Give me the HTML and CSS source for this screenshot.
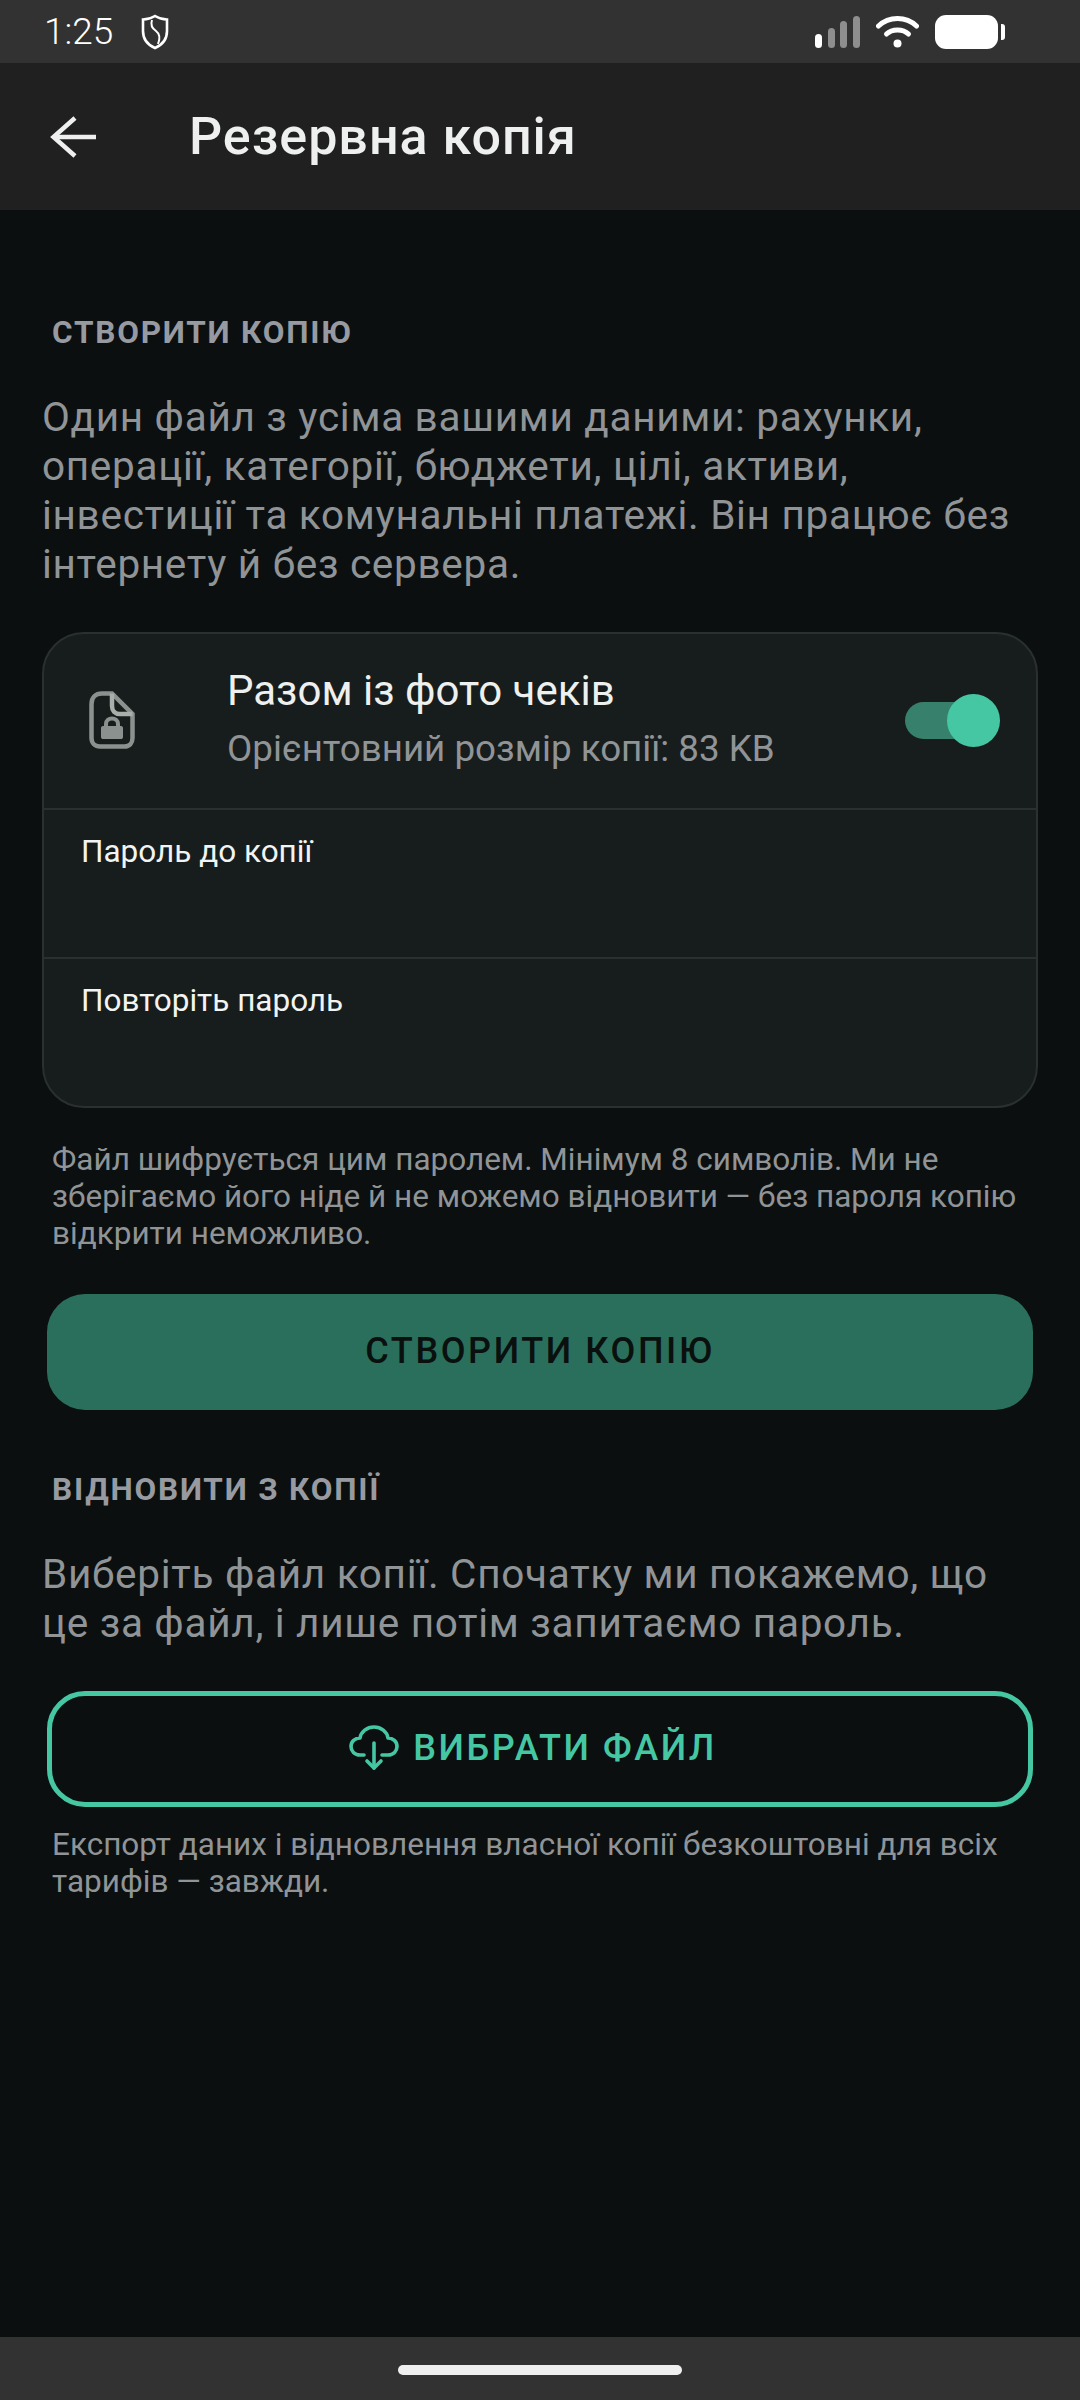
FILE: index.html
```html
<!DOCTYPE html>
<html lang="uk">
<head>
    <meta charset="UTF-8" />
    <meta name="viewport" content="width=device-width, initial-scale=1.0" />
    <title>Резервна копія</title>
    <link rel="stylesheet" href="styles.css">
</head>
<body>
    <div class="screen">
        <div class="status-bar">
            <div class="status-left">
                <span class="clock">1:25</span>
                <svg class="shield" viewBox="0 0 28 36" fill="none" stroke="#fff" stroke-width="2.6">
                    <path d="M14 2 C18 4.5 22 5.5 26 5.5 V17 C26 25 21 31 14 34 C7 31 2 25 2 17 V5.5 C6 5.5 10 4.5 14 2 Z" />
                    <path d="M11 6 C9 12 12 15 15 17 C19 20 19 25 17 30" stroke-width="2" />
                </svg>
            </div>
            <div class="status-right">
                <svg class="signal" viewBox="0 0 45 32">
                    <rect x="0" y="18" width="7" height="14" rx="3.5" fill="#fff" />
                    <rect x="13" y="12" width="7" height="20" rx="3.5" fill="#8e8e8e" />
                    <rect x="25" y="5" width="7" height="27" rx="3.5" fill="#8e8e8e" />
                    <rect x="38" y="0" width="7" height="32" rx="3.5" fill="#8e8e8e" />
                </svg>
                <svg class="wifi" viewBox="0 0 43 32" fill="none" stroke="#fff" stroke-width="5" stroke-linecap="round">
                    <path d="M2.500 10 C13 0 30 0 40.500 10" />
                    <path d="M10.500 18 C16 12.500 27 12.500 32.500 18" />
                    <circle cx="21.500" cy="27.500" r="4" fill="#fff" stroke="none" />
                </svg>
                <div class="battery">
                    <div class="battery-body"></div>
                    <div class="battery-tip"></div>
                </div>
            </div>
        </div>

        <header class="app-bar">
            <svg class="back" viewBox="0 0 46 42" fill="none" stroke="#edf0ee" stroke-width="4.500">
                <path d="M46 21 H4" />
                <path d="M25 2 L3.500 21 L25 40" />
            </svg>
            <h1 class="app-title">Резервна копія</h1>
        </header>

        <main class="content">
            <h2 class="section-title">СТВОРИТИ КОПІЮ</h2>
            <p class="lead">Один файл з усіма вашими даними: рахунки, операції, категорії, бюджети, цілі, активи, інвестиції та комунальні платежі. Він працює без інтернету й без сервера.</p>

            <div class="card">
                <div class="photo-row">
                    <svg class="file-icon" viewBox="0 0 46 58" fill="none">
                        <path d="M13 2.5 H23 L43.5 23 V47 C43.5 52 40.5 55.5 35.5 55.5 H11 C6 55.5 2.5 52 2.5 47 V13 C2.5 6.500 6.500 2.500 13 2.500 Z" stroke="#8b918e" stroke-width="4.500" />
                        <path d="M23 2.500 V15 C23 20 26 23 31 23 H43.500" stroke="#a9aeab" stroke-width="4.500" />
                        <path d="M14 35 H32 C33.500 35 34 36 34 37 V46 C34 47.500 33 48 32 48 H14 C13 48 12 47.500 12 46 V37 C12 36 12.500 35 14 35 Z" fill="#8b918e" />
                        <path d="M17 35 V33 C17 25.500 29 25.500 29 33 V35" stroke="#8b918e" stroke-width="4" />
                    </svg>
                    <div class="photo-text">
                        <div class="photo-title">Разом із фото чеків</div>
                        <div class="photo-sub">Орієнтовний розмір копії: 83 KB</div>
                    </div>
                    <div class="switch">
                        <div class="switch-thumb"></div>
                    </div>
                </div>
                <div class="field">Пароль до копії</div>
                <div class="field">Повторіть пароль</div>
            </div>

            <p class="note note-first">Файл шифрується цим паролем. Мінімум 8 символів. Ми не зберігаємо його ніде й не можемо відновити — без пароля копію відкрити неможливо.</p>

            <button class="btn btn-filled">СТВОРИТИ КОПІЮ</button>

            <h2 class="section-title section-restore">ВІДНОВИТИ З КОПІЇ</h2>
            <p class="lead lead-restore">Виберіть файл копії. Спочатку ми покажемо, що це за файл, і лише потім запитаємо пароль.</p>

            <button class="btn btn-outline">
                <svg class="cloud" viewBox="0 0 50 46" fill="none" stroke="#45c7a4" stroke-width="3.600" stroke-linecap="round" stroke-linejoin="round">
                    <path d="M15 30 H11 C5.500 30 2 26 2 21.500 C2 16.500 6 13 11 13 C12 6.500 18 2 25 2 C32 2 38 6.500 39 13 C44 13 48 16.500 48 21.500 C48 26 44.500 30 39 30 H33" />
                    <path d="M25 18 V43" />
                    <path d="M18 36 L25 43 L32 36" />
                </svg>
                ВИБРАТИ ФАЙЛ
            </button>

            <p class="note note-last">Експорт даних і відновлення власної копії безкоштовні для всіх тарифів — завжди.</p>
        </main>

        <div class="nav-bar">
            <div class="home-pill"></div>
        </div>
    </div>
</body>
</html>
```

FILE: styles.css
```css
* {
    margin: 0;
    padding: 0;
    box-sizing: border-box;
}

body {
    width: 1080px;
    height: 2400px;
    overflow: hidden;
    background-color: #0b0f0f;
    font-family: Roboto, 'Noto Sans', sans-serif;
}

.screen {
    height: 2400px;
    display: flex;
    flex-direction: column;
}

.status-bar {
    height: 63px;
    padding: 0 75px 0 44px;
    display: flex;
    align-items: center;
    justify-content: space-between;
    background-color: #323232;
}

.status-left {
    display: flex;
    align-items: center;
    gap: 27px;
}

.clock {
    color: #fff;
    font-size: 37px;
    font-weight: 300;
}

.shield {
    width: 30px;
    height: 36px;
}

.status-right {
    display: flex;
    align-items: center;
    gap: 16px;
}

.signal {
    width: 45px;
    height: 32px;
}

.wifi {
    width: 43px;
    height: 32px;
}

.battery {
    display: flex;
    align-items: center;
    gap: 3px;
}

.battery-body {
    width: 63px;
    height: 34px;
    border-radius: 11px;
    background-color: #fff;
}

.battery-tip {
    width: 4px;
    height: 16px;
    border-radius: 0 3px 3px 0;
    background-color: #fff;
}

.app-bar {
    height: 147px;
    padding-left: 50px;
    display: flex;
    align-items: center;
    background-color: #202020;
}

.back {
    width: 46px;
    height: 42px;
}

.app-title {
    margin-left: 93px;
    color: #edf0ee;
    font-size: 52px;
    font-weight: 500;
    letter-spacing: 1px;
}

.content {
    flex: 1;
    padding: 0 42px;
    background-color: #0b0f0f;
}

.section-title {
    margin: 105px 0 0 10px;
    color: #979aa0;
    font-size: 31.5px;
    font-weight: 700;
    line-height: 36px;
    letter-spacing: 1.8px;
}

.section-restore {
    margin-top: 62px;
}

.lead {
    margin-top: 42px;
    color: #909497;
    font-size: 40.5px;
    line-height: 49px;
    letter-spacing: 0.7px;
}

.lead-restore {
    margin-top: 42px;
}

.card {
    margin-top: 43px;
    height: 476px;
    border: 2px solid #2a302f;
    border-radius: 42px;
    background-color: #171d1c;
}

.photo-row {
    height: 174px;
    padding: 0 37px 2px 45px;
    display: flex;
    align-items: center;
}

.file-icon {
    width: 46px;
    height: 58px;
}

.photo-text {
    flex: 1;
    margin-left: 92px;
}

.photo-title {
    color: #edf0ee;
    font-size: 42px;
    line-height: 58px;
}

.photo-sub {
    color: #909497;
    font-size: 36.75px;
    line-height: 58px;
}

.switch {
    position: relative;
    width: 94px;
    height: 37px;
    border-radius: 18.5px;
    background-color: #37806b;
}

.switch-thumb {
    position: absolute;
    top: -8px;
    right: -1px;
    width: 53px;
    height: 53px;
    border-radius: 50%;
    background-color: #45c7a4;
}

.field {
    height: 149px;
    padding: 24px 0 0 37px;
    border-top: 2px solid #2a302f;
    color: #f2f4f3;
    font-size: 31.5px;
    line-height: 36px;
}

.note {
    margin-left: 10px;
    color: #909497;
    font-size: 31.5px;
    line-height: 37px;
}

.note-first {
    margin-top: 33px;
}

.note-last {
    margin-top: 19px;
}

.btn {
    width: 986px;
    height: 116px;
    margin-left: 5px;
    padding-bottom: 2px;
    display: flex;
    align-items: center;
    justify-content: center;
    border-radius: 38px;
    font-family: inherit;
    font-size: 36px;
    font-weight: 500;
    letter-spacing: 2.6px;
}

.btn-filled {
    margin-top: 42px;
    border: none;
    background-color: #2a6f5b;
    color: #0a100e;
}

.btn-outline {
    margin-top: 43px;
    padding-right: 14px;
    gap: 14px;
    border: 5px solid #45c7a4;
    background-color: transparent;
    color: #45c7a4;
}

.cloud {
    width: 50px;
    height: 46px;
}

.nav-bar {
    height: 63px;
    display: flex;
    justify-content: center;
    padding-top: 28px;
    background-color: #323232;
}

.home-pill {
    width: 284px;
    height: 10px;
    border-radius: 5px;
    background-color: #efefef;
}
```
